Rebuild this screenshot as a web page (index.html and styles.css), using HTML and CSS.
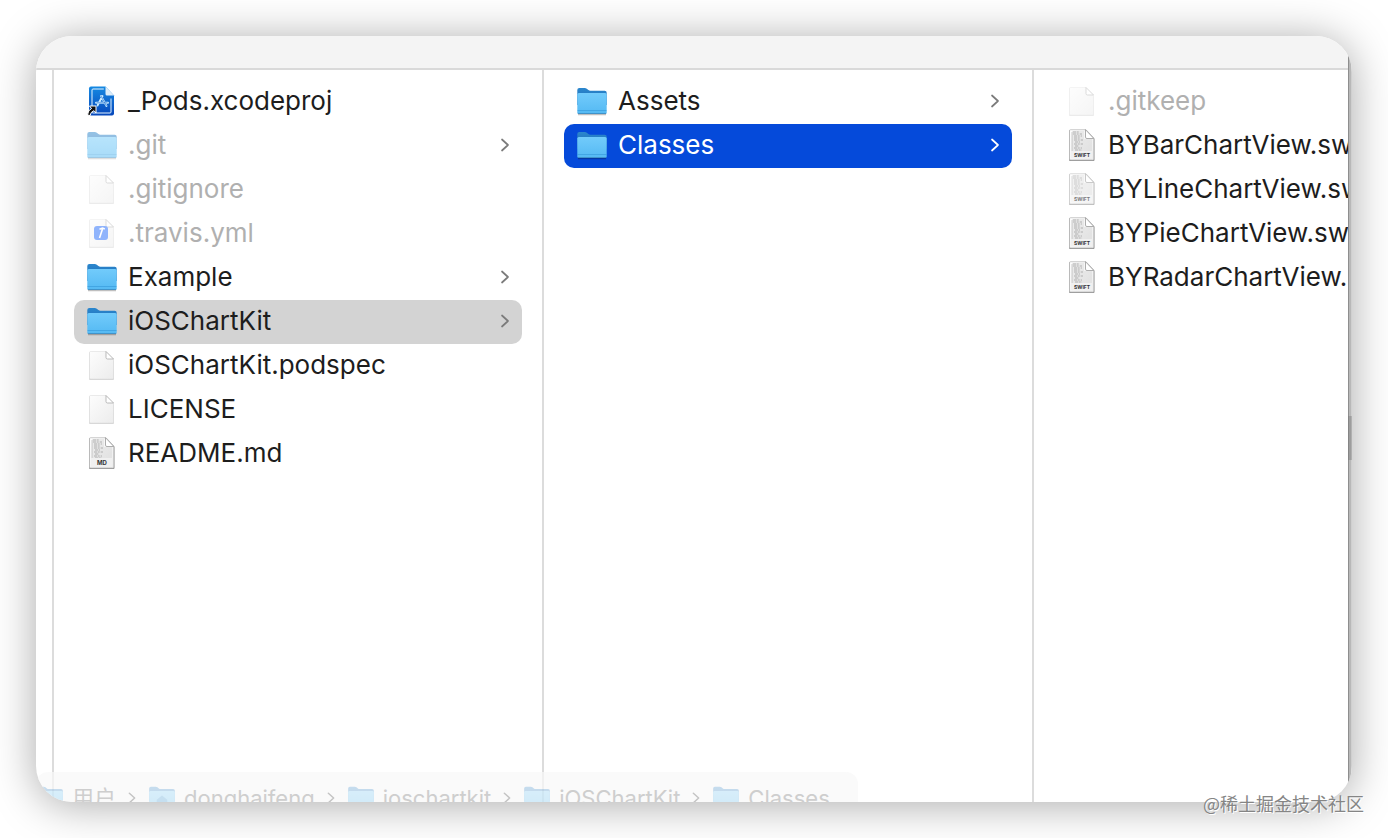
FILE: index.html
```html
<!DOCTYPE html>
<html lang="zh-CN">
<head>
<meta charset="utf-8">
<meta name="viewport" content="width=device-width, initial-scale=1">
<title>iOSChartKit</title>
<link rel="stylesheet" href="styles.css">
</head>
<body>
<svg class="sprite" aria-hidden="true">
  <defs>
    <linearGradient id="front" x1="0" y1="0" x2="0" y2="1"><stop offset="0" stop-color="#72cbfb"/><stop offset="1" stop-color="#54b9f3"/></linearGradient>
    <linearGradient id="back" x1="0" y1="0" x2="0" y2="1"><stop offset="0" stop-color="#2c87cd"/><stop offset="1" stop-color="#1a69b4"/></linearGradient>
    <linearGradient id="paper" x1="0" y1="0" x2="1" y2="1"><stop offset="0" stop-color="#fdfdfd"/><stop offset="1" stop-color="#ececec"/></linearGradient>
    <linearGradient id="blue" x1="0" y1="0" x2="0" y2="1"><stop offset="0" stop-color="#1689e2"/><stop offset="1" stop-color="#0747bb"/></linearGradient>
    <symbol id="folder" viewBox="0 0 32 32">
      <path d="M2 29.500h28" stroke="#000" stroke-opacity=".25" stroke-width="1.500"/>
      <path d="M1.300 5q0-2 2-2h5.500q1 0 2 .8l1.600 1.300q.8.600 2 .600h14.300q2 0 2 2V20H1.300z" fill="url(#back)"/>
      <path d="M1.300 9.500q0-1.600 1.600-1.600h26.200q1.600 0 1.600 1.600v17.800q0 1.700-1.700 1.700H3q-1.700 0-1.700-1.700z" fill="url(#front)"/>
      <path d="M1.500 25.500h29" stroke="#2b8fd2" stroke-opacity=".7" stroke-width=".7"/>
      <path d="M1.800 28.500h28.400" stroke="#3f8fc4" stroke-width=".9"/>
    </symbol>
    <symbol id="sheet" viewBox="0 0 32 32">
      <path d="M4 3h15.500l8.500 8.500V30q0 1-1 1H4q-1 0-1-1V4q0-1 1-1z" fill="#000" opacity=".16"/>
      <path d="M4.500 2.500H20l7.500 7.500v19q0 1-1 1h-22q-1 0-1-1v-25.500q0-1 1-1z" fill="url(#paper)" stroke="#dedede" stroke-width=".6"/>
      <path d="M20 2.500v6q0 1.500 1.500 1.500h6z" fill="#fff" stroke="#aaa" stroke-width=".8"/>
    </symbol>
    <symbol id="code" viewBox="0 0 32 32">
      <path d="M4 1h15.500l9 9v21q0 1-1 1H4q-1 0-1-1V2q0-1 1-1z" fill="#000" opacity=".42"/>
      <path d="M4.500.700H20l7.800 8.300v21q0 1-1 1H4.500q-1 0-1-1V1.700q0-1 1-1z" fill="url(#paper)" stroke="#b4b4b4" stroke-width=".7"/>
      <path d="M6 2h12v8h8v12H6z" fill="#bbb" opacity=".25"/>
      <path d="M7 3h6M7 5h9M8 7h8M8 9h6M8 11h9M9 13h5M8 15h9M9 17h4M8 19h8M9 21h7" stroke="#999" stroke-width=".7" stroke-dasharray="3 .7 2 1"/>
      <path d="M6 3v19" stroke="#b8b8b8" stroke-width=".7"/>
      <path d="M19.500.700v7.500q0 1.300 1.500 1.300h6.800z" fill="#fff" stroke="#999" stroke-width=".8"/>
    </symbol>
    <symbol id="xcode" viewBox="0 0 32 32">
      <path d="M5 1.500h14.500l8.500 9v18q0 2-2 2H5q-2 0-2-2v-25q0-2 2-2z" fill="url(#blue)"/>
      <path d="M19.500 1.500v7.500q0 1.500 1.500 1.500h7z" fill="#dcecf8"/>
      <path d="M17.800 4H7q-1 0-1 1v22q0 1 1 1h17q1 0 1-1V13.500" fill="none" stroke="#e4f4ff" stroke-width="1"/>
      <path d="M15 11l5.500 10M16.500 11l-5 9.500M10 17.800h12" fill="none" stroke="#c9eaff" stroke-width="1.900" stroke-linecap="round"/>
      <path d="M10.500 17.800h11M15 11l5.500 10" stroke="#1966ca" stroke-width=".6"/>
      <path d="M1.500 30q.5-5 4-6.500L3.500 21H10v7l-2-2.300q-3.300 1-4 4.800z" fill="#111" stroke="#fff" stroke-width="1"/>
    </symbol>
    <symbol id="chevron" viewBox="0 0 10 16"><path d="M2 2.500 8 8l-6 5.500" fill="none" stroke="currentColor" stroke-width="1.700" stroke-linecap="round" stroke-linejoin="round"/></symbol>
  </defs>
</svg>

<main class="window">
  <header class="titlebar"></header>
  <div class="browser">
    <div class="gutter"></div>
    <ul class="column">
      <li><button class="row"><svg class="icon"><use href="#xcode"/></svg><span class="name">_Pods.xcodeproj</span></button></li>
      <li><button class="row hidden-file"><svg class="icon"><use href="#folder"/></svg><span class="name">.git</span><svg class="chevron"><use href="#chevron"/></svg></button></li>
      <li><button class="row hidden-file"><svg class="icon"><use href="#sheet"/></svg><span class="name">.gitignore</span></button></li>
      <li><button class="row hidden-file"><svg class="icon" viewBox="0 0 32 32"><use href="#sheet"/><rect x="8" y="9" width="14" height="14" rx="3" fill="#246bfa"/><path d="M16.500 12l-3 9M13.500 12.300l3-1.200 2.300 1" fill="none" stroke="#fff" stroke-width="1.600"/></svg><span class="name">.travis.yml</span></button></li>
      <li><button class="row"><svg class="icon"><use href="#folder"/></svg><span class="name">Example</span><svg class="chevron"><use href="#chevron"/></svg></button></li>
      <li><button class="row open"><svg class="icon"><use href="#folder"/></svg><span class="name">iOSChartKit</span><svg class="chevron"><use href="#chevron"/></svg></button></li>
      <li><button class="row"><svg class="icon"><use href="#sheet"/></svg><span class="name">iOSChartKit.podspec</span></button></li>
      <li><button class="row"><svg class="icon"><use href="#sheet"/></svg><span class="name">LICENSE</span></button></li>
      <li><button class="row"><svg class="icon" viewBox="0 0 32 32"><use href="#code"/><rect x="5" y="21" width="21" height="9" fill="#f0f0f0"/><text class="badge" x="16" y="28">MD</text></svg><span class="name">README.md</span></button></li>
    </ul>
    <ul class="column">
      <li><button class="row"><svg class="icon"><use href="#folder"/></svg><span class="name">Assets</span><svg class="chevron"><use href="#chevron"/></svg></button></li>
      <li><button class="row selected"><svg class="icon"><use href="#folder"/></svg><span class="name">Classes</span><svg class="chevron"><use href="#chevron"/></svg></button></li>
    </ul>
    <ul class="column last">
      <li><button class="row hidden-file"><svg class="icon"><use href="#sheet"/></svg><span class="name">.gitkeep</span></button></li>
      <li><button class="row"><svg class="icon" viewBox="0 0 32 32"><use href="#code"/><rect x="5" y="22" width="21" height="7" fill="#f0f0f0"/><text class="badge small" x="16" y="28">SWIFT</text></svg><span class="name">BYBarChartView.swift</span></button></li>
      <li><button class="row"><svg class="icon faint" viewBox="0 0 32 32"><use href="#code"/><rect x="5" y="22" width="21" height="7" fill="#f0f0f0"/><text class="badge small" x="16" y="28">SWIFT</text></svg><span class="name">BYLineChartView.swift</span></button></li>
      <li><button class="row"><svg class="icon" viewBox="0 0 32 32"><use href="#code"/><rect x="5" y="22" width="21" height="7" fill="#f0f0f0"/><text class="badge small" x="16" y="28">SWIFT</text></svg><span class="name">BYPieChartView.swift</span></button></li>
      <li><button class="row"><svg class="icon" viewBox="0 0 32 32"><use href="#code"/><rect x="5" y="22" width="21" height="7" fill="#f0f0f0"/><text class="badge small" x="16" y="28">SWIFT</text></svg><span class="name">BYRadarChartView.swift</span></button></li>
    </ul>
  </div>
  <div class="edge"><div class="thumb"></div></div>
  <nav class="path" aria-label="Path">
    <a href="#"><svg class="path-icon"><use href="#folder"/></svg>用户</a><svg class="path-chevron"><use href="#chevron"/></svg>
    <a href="#"><svg class="path-icon" viewBox="0 0 32 32"><use href="#folder"/><path d="M10 18l6-5 6 5v7H10z" fill="#2b8fd2"/></svg>donghaifeng</a><svg class="path-chevron"><use href="#chevron"/></svg>
    <a href="#"><svg class="path-icon"><use href="#folder"/></svg>ioschartkit</a><svg class="path-chevron"><use href="#chevron"/></svg>
    <a href="#"><svg class="path-icon"><use href="#folder"/></svg>iOSChartKit</a><svg class="path-chevron"><use href="#chevron"/></svg>
    <a href="#"><svg class="path-icon"><use href="#folder"/></svg>Classes</a>
  </nav>
</main>
<div class="watermark">@稀土掘金技术社区</div>
</body>
</html>
```
FILE: styles.css
```css
* { box-sizing: border-box; }

body {
  margin: 0;
  padding: 36px;
  min-height: 100vh;
  display: flex;
  position: relative;
  overflow: hidden;
  background: #fff;
  color: #1d1d1d;
  font-family: Inter, "Noto Sans CJK SC", sans-serif;
}

.sprite { position: absolute; width: 0; height: 0; }

.window {
  flex: 1;
  min-width: 0;
  position: relative;
  display: grid;
  grid-template-columns: minmax(0, 1fr) 4px;
  grid-template-rows: 34px 1fr;
  overflow: hidden;
  border-radius: 36px;
  background: #fff;
  box-shadow: 0 3px 44px rgba(0, 0, 0, .34);
}

.titlebar { background: #f4f4f4; border-bottom: 2px solid #d9d9d9; }

.browser {
  grid-row: 2;
  display: flex;
  min-width: 0;
  overflow: hidden;
}

.gutter { flex: 0 0 18px; border-right: 2px solid #dcdcdc; }

.column {
  flex: 0 0 490px;
  margin: 0;
  padding: 10px 20px;
  list-style: none;
  border-right: 2px solid #dcdcdc;
}

.column.last { border-right: 0; }

.row {
  display: flex;
  align-items: center;
  gap: 10px;
  width: 100%;
  height: 44px;
  padding: 0 12px 2px;
  border: 0;
  border-radius: 10px;
  background: none;
  color: inherit;
  font: inherit;
  font-size: 26px;
  line-height: 42px;
  text-align: left;
  white-space: nowrap;
}

.icon { flex: none; width: 32px; height: 32px; }
.icon.faint { opacity: .65; }
.name { flex: 1; }
.chevron { flex: none; width: 10px; height: 16px; color: #7b7b7b; }

.hidden-file .name { color: #b0b0b0; }
.hidden-file .icon { opacity: .5; }
.row.open { background: #d3d3d3; }
.row.selected { background: #054ada; color: #fff; }
.selected .chevron { color: #fff; }

.badge {
  font: 700 6px Inter, sans-serif;
  text-anchor: middle;
  fill: #333;
}
.badge.small { font-size: 5px; }

.edge {
  grid-column: 2;
  grid-row: 1 / 3;
  background: linear-gradient(to right, #8e8e8e 1px, #b8b8b8 1px 3px, #cfcfcf 3px);
}

.thumb {
  height: 44px;
  margin-top: 380px;
  background: linear-gradient(to right, #858585 1px, #9d9d9d 1px 3px, #b0b0b0 3px);
}

.path {
  position: absolute;
  left: 0;
  bottom: -22px;
  display: flex;
  align-items: center;
  gap: 11px;
  height: 52px;
  padding-right: 28px;
  border-radius: 12px;
  background: rgba(248, 248, 248, .7);
  font-size: 22px;
  line-height: 52px;
  white-space: nowrap;
}

.path a {
  display: flex;
  align-items: center;
  gap: 8px;
  color: #cecece;
  text-decoration: none;
}

.path-icon { width: 28px; height: 28px; opacity: .25; }
.path-chevron { width: 10px; height: 14px; color: #c4c4c4; }

.watermark {
  position: absolute;
  right: 24px;
  bottom: 22px;
  color: #858585;
  font: 18px/26px "Noto Sans CJK SC", sans-serif;
  text-shadow: 1px 1px 0 #fff;
}
```
